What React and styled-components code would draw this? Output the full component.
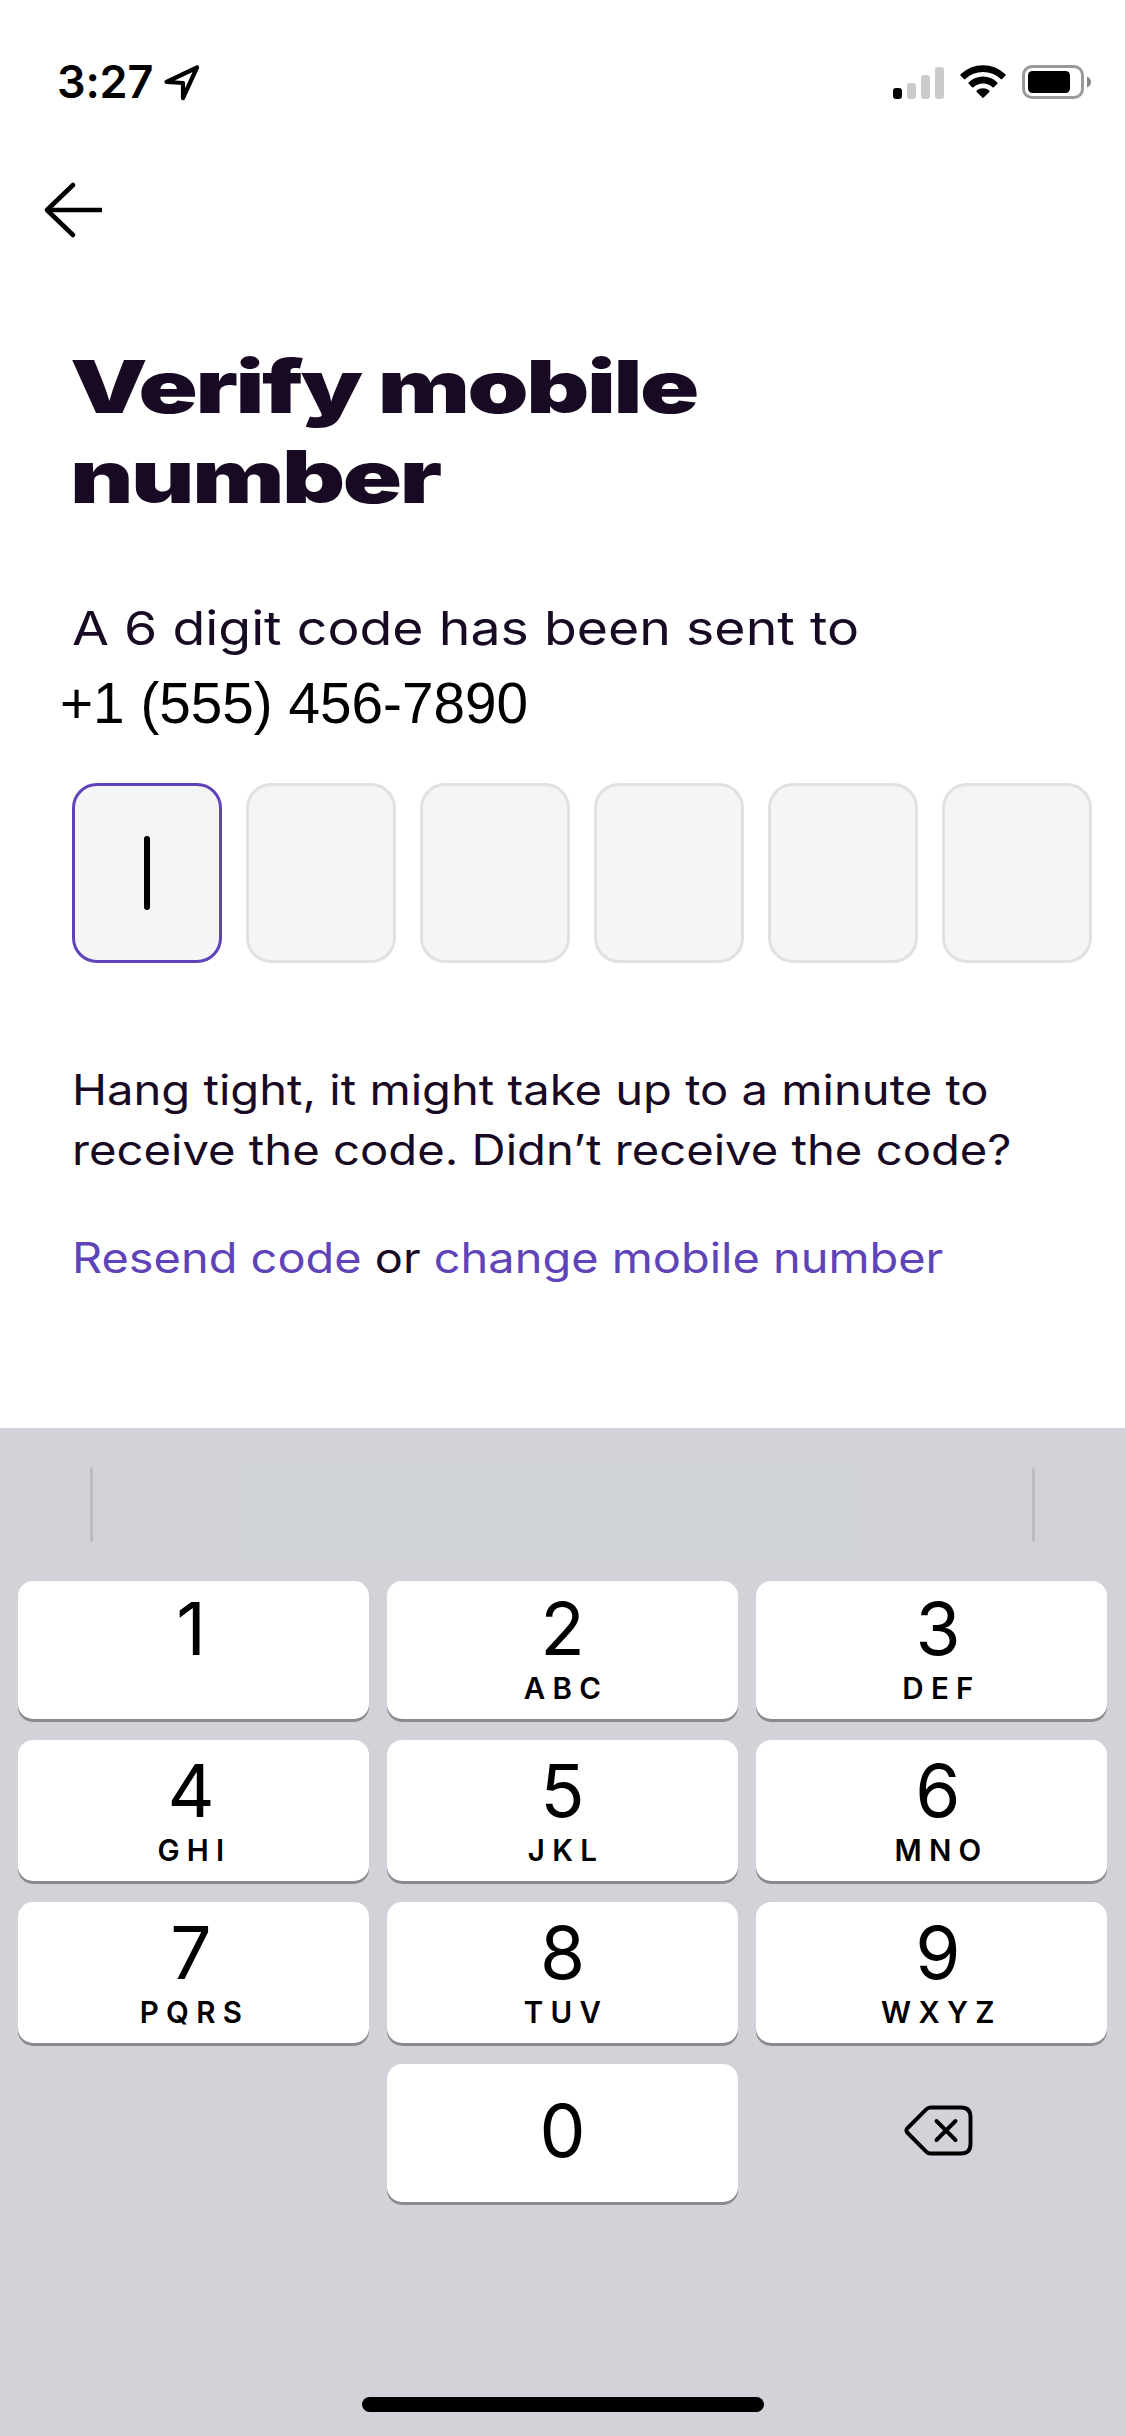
import { useState } from "react";
import styled, { createGlobalStyle } from 'styled-components';

const INK = '#190a24';
const PURPLE = '#5f43b9';

const CODE_LENGTH = 6;

const KEY_ROWS = [
  [['1', ''], ['2', 'ABC'], ['3', 'DEF']],
  [['4', 'GHI'], ['5', 'JKL'], ['6', 'MNO']],
  [['7', 'PQRS'], ['8', 'TUV'], ['9', 'WXYZ']],
];

// The outer columns are not centered on their keys: [left, right] padding
const COLUMN_PADDING = [[0, 5], [0, 0], [13, 0]];

const GlobalStyle = createGlobalStyle`
  * {
    box-sizing: border-box;
  }

  body {
    margin: 0;
    background: #fff;
    font-family: Inter, "Liberation Sans", sans-serif;
  }
`;

const Screen = styled.div`
  display: flex;
  flex-direction: column;
  width: 1125px;
  height: 2436px;
  overflow: hidden;
  background: #fff;
`;

const StatusBar = styled.header`
  display: flex;
  align-items: center;
  height: 132px;
  padding: 32px 34px 0 57px;
`;

const Clock = styled.span`
  font-size: 45px;
  font-weight: 580;
  line-height: 60px;
  letter-spacing: -0.2px;
`;

const LocationIcon = styled.svg`
  margin-left: 10px;
`;

const StatusIcons = styled.div`
  display: flex;
  align-items: center;
  margin-left: auto;
`;

const Signal = styled.div`
  display: flex;
  align-items: flex-end;
  gap: 5px;
  height: 33px;
`;

const SignalBar = styled.i`
  width: 9px;
  height: ${p => p.$height}px;
  border-radius: 3px;
  background: ${p => (p.$on ? '#000' : '#cbcbcb')};
`;

const WifiIcon = styled.svg`
  margin: 0 16px;
`;

const NavBar = styled.nav`
  height: 210px;
  padding: 48px 0 0 42px;
`;

const BackButton = styled.button`
  display: block;
  padding: 0;
  border: 0;
  background: none;
`;

const Content = styled.main`
  display: flex;
  flex-direction: column;
  height: 1086px;
  padding-left: 72px;
  color: ${INK};
`;

// Wide display face, made from the regular width
const Line = styled.span`
  display: block;
  width: max-content;
  white-space: pre;
  transform: scaleX(${p => p.$stretch});
  transform-origin: 0 50%;
`;

const Title = styled.h1`
  margin: 0 0 0 -2px;
  font-size: 73px;
  font-weight: 900;
  line-height: 90px;
  letter-spacing: -1.8px;
`;

const SentTo = styled.p`
  height: 73px;
  margin: 76px 0 0;
  font-size: 47px;
  line-height: 60px;
`;

const Phone = styled.p`
  margin: 0 0 0 -12px;
  color: #000;
  font-family: "Liberation Sans", Arial, sans-serif;
  font-size: 56.7px;
  line-height: 66px;
`;

const CodeInputs = styled.div`
  display: flex;
  gap: 24px;
  margin-top: 46px;
`;

const CodeBox = styled.div`
  display: flex;
  align-items: center;
  justify-content: center;
  width: 150px;
  height: 180px;
  border: 3px solid ${p => (p.$active ? PURPLE : '#e1e1e1')};
  border-radius: 25px;
  background: #f5f5f5;
`;

const Caret = styled.i`
  width: 6px;
  height: 74px;
  border-radius: 3px;
  background: #000;
`;

const Hint = styled.p`
  margin: 97px 0 0;
  font-size: 42px;
  line-height: 60px;
`;

const Actions = styled.p`
  margin: 48px 0 0;
  font-size: 42px;
  line-height: 60px;
`;

const Link = styled.a`
  color: ${PURPLE};
`;

const Keyboard = styled.section`
  display: flex;
  flex-direction: column;
  height: 1008px;
  background: #d2d3d8;
`;

const Suggestions = styled.div`
  display: flex;
  justify-content: space-between;
  align-items: center;
  height: 153px;
  padding: 0 90px;
`;

const Divider = styled.i`
  width: 3px;
  height: 75px;
  border-radius: 2px;
  background: #bcbdc2;
`;

const SuggestionSlot = styled.div`
  width: 616px;
  height: 91px;
  margin: 8px auto 0 147px;
  background: #d0d3d8;
`;

const Keys = styled.div`
  display: grid;
  grid-template-columns: repeat(3, 351px);
  grid-template-rows: 138px 141px 141px 138px;
  gap: 21px 18px;
  padding: 0 18px;
`;

const Key = styled.button`
  display: flex;
  flex-direction: column;
  align-items: center;
  justify-content: ${p => (p.$single ? 'center' : 'flex-end')};
  padding: 0 ${p => p.$right || 0}px ${p => (p.$single ? 4 : 13)}px ${p => p.$left || 0}px;
  border: 0;
  border-radius: 15px;
  background: #fff;
  box-shadow: 0 3px 0 #898a8d;
  color: #000;
  font-family: inherit;
`;

const Digit = styled.span`
  font-size: 73px;
  line-height: 72px;
`;

const Letters = styled.span`
  height: 36px;
  margin-top: 5px;
  padding-left: 7px;
  font-size: 29.5px;
  font-weight: 630;
  line-height: 36px;
  letter-spacing: 7.3px;
`;

const DeleteKey = styled.button`
  grid-column: 3;
  display: flex;
  align-items: center;
  justify-content: center;
  padding: 0 0 6px 14px;
  border: 0;
  background: none;
`;

const HomeIndicator = styled.div`
  width: 402px;
  height: 15px;
  margin: auto auto 24px;
  border-radius: 8px;
  background: #000;
`;

const Status = () => (
  <StatusBar>
    <Clock>3:27</Clock>
    <LocationIcon width="39" height="39" viewBox="0 0 39 39" fill="none">
      <path d="M3.500 19 34 4.500 20 35V20Z" stroke="#000" strokeWidth="4.200" strokeLinejoin="round" />
    </LocationIcon>
    <StatusIcons>
      <Signal>
        <SignalBar $height={11} $on />
        <SignalBar $height={16} />
        <SignalBar $height={24} />
        <SignalBar $height={32} />
      </Signal>
      <WifiIcon width="46" height="34" viewBox="0 0 46 34">
        <path d="M.6 9.300a32 32 0 0 1 44.800 0q.6.800 0 1.500l-3.300 3.300q-.7.600-1.400 0a25.500 25.500 0 0 0-35.400 0q-.7.600-1.400 0L.6 10.800q-.6-.7 0-1.500Z" />
        <path d="M8.700 17.400a20.500 20.500 0 0 1 28.600 0q.7.700 0 1.400l-3.400 3.400q-.7.600-1.400 0a14 14 0 0 0-19 0q-.7.600-1.400 0l-3.400-3.400q-.7-.7 0-1.400Z" />
        <path d="M16.700 25.600a9.500 9.500 0 0 1 12.600 0q.6.600 0 1.300l-5.600 5.700q-.7.600-1.400 0l-5.600-5.700q-.6-.7 0-1.300Z" />
      </WifiIcon>
      <svg width="69" height="34" viewBox="0 0 69 34">
        <rect x="1.500" y="1.500" width="59" height="31" rx="8.500" fill="none" stroke="#999" strokeWidth="3" />
        <rect x="6" y="6" width="42" height="22" rx="4.500" />
        <path d="M65 11.500q4 1.700 4 5.500t-4 5.500Z" fill="#888" />
      </svg>
    </StatusIcons>
  </StatusBar>
);

const NumberPad = ({ onDigit, onDelete }) => (
  <Keyboard>
    <Suggestions>
      <Divider />
      <SuggestionSlot />
      <Divider />
    </Suggestions>
    <Keys>
      {KEY_ROWS.map(row => row.map(([digit, letters], col) => (
        <Key
          key={digit}
          $left={COLUMN_PADDING[col][0]}
          $right={COLUMN_PADDING[col][1]}
          onClick={() => onDigit(digit)}
        >
          <Digit>{digit}</Digit>
          <Letters>{letters}</Letters>
        </Key>
      )))}
      <span />
      <Key $single onClick={() => onDigit('0')}>
        <Digit>0</Digit>
      </Key>
      <DeleteKey onClick={onDelete} aria-label="Delete">
        <svg width="69" height="51" viewBox="0 0 69 51" fill="none" stroke="#000" strokeWidth="3.900" strokeLinecap="round" strokeLinejoin="round">
          <path d="M26.500 2.500H57q9.500 0 9.500 9.500v27q0 9.500-9.500 9.500H26.500q-2.500 0-4.300-1.900L3.200 27.500q-1.600-2 0-4L22.200 4.400Q24 2.500 26.500 2.500Z" />
          <path d="M32.500 16l19 19M51.500 16l-19 19" />
        </svg>
      </DeleteKey>
    </Keys>
    <HomeIndicator />
  </Keyboard>
);

const App = () => {
  const [code, setCode] = useState('');

  const onDigit = digit => setCode(prev => (prev + digit).slice(0, CODE_LENGTH));

  const onDelete = () => setCode(prev => prev.slice(0, -1));

  return (
    <Screen>
      <GlobalStyle />
      <Status />
      <NavBar>
        <BackButton aria-label="Back">
          <svg width="62" height="60" viewBox="0 0 62 60" fill="none" stroke="#000" strokeWidth="4.600">
            <path d="M31 5 5 30l26 25" strokeLinecap="round" strokeLinejoin="round" />
            <path d="M5 30h55" />
          </svg>
        </BackButton>
      </NavBar>
      <Content>
        <Title>
          <Line $stretch={1.34}>Verify mobile</Line>
          <Line $stretch={1.34}>number</Line>
        </Title>
        <SentTo>
          <Line $stretch={1.141}>A 6 digit code has been sent to</Line>
        </SentTo>
        <Phone>+1 (555) 456-7890</Phone>
        <CodeInputs>
          {Array.from({ length: CODE_LENGTH }, (_, i) => (
            <CodeBox key={i} $active={i === code.length}>
              {i === code.length ? <Caret /> : code[i]}
            </CodeBox>
          ))}
        </CodeInputs>
        <Hint>
          <Line $stretch={1.122}>Hang tight, it might take up to a minute to</Line>
          <Line $stretch={1.124}>receive the code. Didn’t receive the code?</Line>
        </Hint>
        <Actions>
          <Line $stretch={1.117}>
            <Link>Resend code</Link> or <Link>change mobile number</Link>
          </Line>
        </Actions>
      </Content>
      <NumberPad onDigit={onDigit} onDelete={onDelete} />
    </Screen>
  );
}

export default App;
